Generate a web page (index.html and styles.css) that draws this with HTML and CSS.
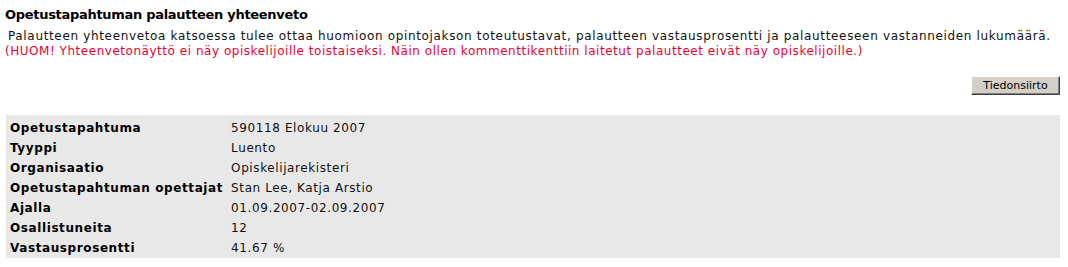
FILE: index.html
```html
<!DOCTYPE html>
<html lang="fi">
<head>
<meta charset="utf-8">
<title>Opetustapahtuman palautteen yhteenveto</title>
<link rel="stylesheet" href="styles.css">
</head>
<body>
<div class="page">
  <h1 class="title">Opetustapahtuman palautteen yhteenveto</h1>
  <p class="intro"><span class="lead">Palautteen yhteenvetoa katsoessa tulee ottaa huomioon opintojakson toteutustavat, palautteen vastausprosentti ja palautteeseen vastanneiden lukumäärä.</span><br><span class="warn">(HUOM! Yhteenvetonäyttö ei näy opiskelijoille toistaiseksi. Näin ollen kommenttikenttiin laitetut palautteet eivät näy opiskelijoille.)</span></p>
  <div class="actions"><button class="btn" type="button">Tiedonsiirto</button></div>
  <table class="summary">
    <tbody>
      <tr><th>Opetustapahtuma</th><td>590118 Elokuu 2007</td></tr>
      <tr><th>Tyyppi</th><td>Luento</td></tr>
      <tr><th>Organisaatio</th><td>Opiskelijarekisteri</td></tr>
      <tr><th>Opetustapahtuman opettajat</th><td>Stan Lee, Katja Arstio</td></tr>
      <tr><th>Ajalla</th><td>01.09.2007-02.09.2007</td></tr>
      <tr><th>Osallistuneita</th><td>12</td></tr>
      <tr><th>Vastausprosentti</th><td>41.67 %</td></tr>
    </tbody>
  </table>
</div>
</body>
</html>
```
FILE: styles.css
```css
html, body {
  margin: 0;
  padding: 0;
  background: #ffffff;
}
body {
  font-family: "DejaVu Sans", Verdana, sans-serif;
  font-size: 12px;
  letter-spacing: 0.6px;
  color: #111111;
}
.page {
  padding: 7px 8px 0 5px;
}
.title {
  margin: 0;
  font-size: 13px;
  letter-spacing: -0.3px;
  line-height: 16px;
  font-weight: bold;
  color: #000000;
}
.intro {
  margin: 6px 0 0 0;
  line-height: 15px;
}
.lead {
  padding-left: 3px;
  letter-spacing: 0.66px;
}
.warn {
  color: #ee0033;
  letter-spacing: 0.53px;
}
.actions {
  display: flex;
  justify-content: flex-end;
  margin-top: 17px;
}
.btn {
  font-family: "DejaVu Sans", Verdana, sans-serif;
  font-size: 11px;
  letter-spacing: 0;
  color: #000000;
  background: #d4d0c8;
  height: 19px;
  width: 89px;
  padding: 0;
  border: 1px solid;
  border-color: #ffffff #404040 #404040 #ffffff;
  box-shadow: inset -1px -1px 0 #808080;
  line-height: 15px;
}
.summary {
  margin: 20px 0 0 1px;
  width: 1054px;
  border-collapse: separate;
  border-spacing: 0;
  background: #e8e8e8;
  padding: 3px 0 0 0;
}
.summary th,
.summary td {
  padding: 2px 4px;
  line-height: 16px;
  text-align: left;
  vertical-align: top;
  white-space: nowrap;
}
.summary th {
  width: 213px;
  font-weight: bold;
  color: #000000;
}
.summary td {
  color: #111111;
}
```
